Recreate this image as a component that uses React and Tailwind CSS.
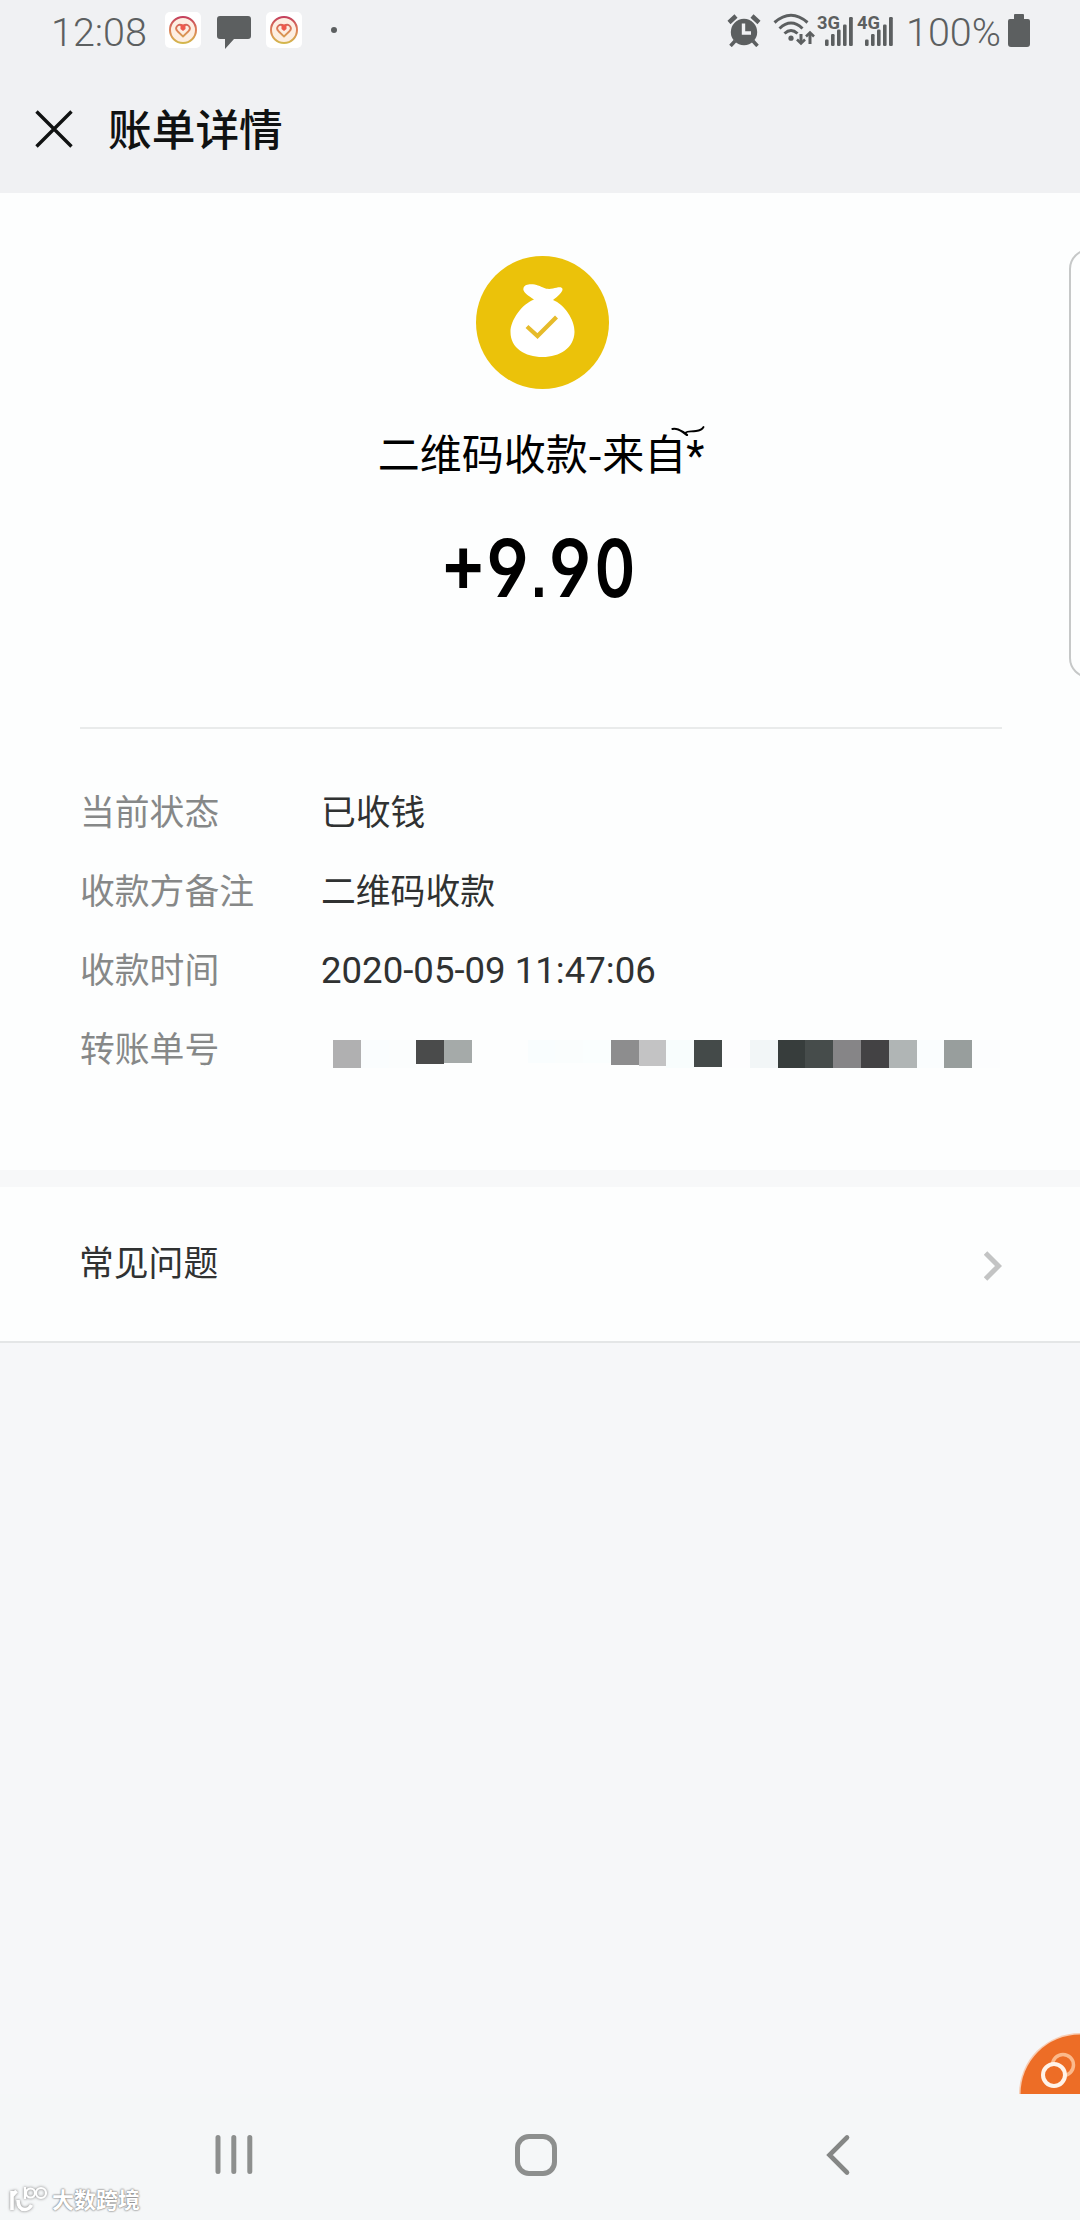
const mosaic = [
  ["bg-[#b0b0b1]", "h-7"], ["bg-[#fafdfe]", "h-7"], ["bg-[#fbfdfd]", "h-7"],
  ["bg-[#4a4b4b]", "h-[24px]"], ["bg-[#a5aaa9]", "h-[23px]"],
  ["bg-[#fdfefe]", "h-[23px]"], ["bg-[#fdfefe]", "h-[23px]"],
  ["bg-[#f9fdfe]", "h-[23px]"], ["bg-[#fafdfd]", "h-[23px]"], ["bg-[#fafefe]", "h-[23px]"],
  ["bg-[#8d8d8e]", "h-[25px]"], ["bg-[#c3c3c4]", "h-[26px]"],
  ["bg-[#f8fdfd]", "h-7"], ["bg-[#444a49]", "h-[27px]"], ["bg-[#fdfdfe]", "h-7"],
  ["bg-[#f2f6f7]", "h-7"], ["bg-[#373d3c]", "h-7"], ["bg-[#464c4b]", "h-7"],
  ["bg-[#868587]", "h-7"], ["bg-[#434244]", "h-7"], ["bg-[#b0b5b5]", "h-7"],
  ["bg-[#fafdfe]", "h-7"], ["bg-[#989e9d]", "h-7"], ["bg-[#fcfdfe]", "h-7"],
];

function HeartBadge({ id }) {
  return (
    <svg className="h-9 w-9" viewBox="0 0 36 36" fill="none">
      <defs>
        <linearGradient id={id} x1="0" y1="4" x2="0" y2="32" gradientUnits="userSpaceOnUse">
          <stop offset="0" stopColor="#c23a5c" />
          <stop offset="0.5" stopColor="#dd8058" />
          <stop offset="1" stopColor="#d3bb4c" />
        </linearGradient>
      </defs>
      <rect width="36" height="36" rx="5" fill="#fff" />
      <circle cx="18" cy="18" r="13" fill="#fdeee2" stroke={`url(#${id})`} strokeWidth="2" />
      <path d="M18 24.5 L12.3 19 C9.3 15.8 13 10.5 18 14 C23 10.5 26.7 15.8 23.7 19 Z" stroke={`url(#${id})`} strokeWidth="1.8" strokeLinejoin="round" />
      <path d="M15.5 12.5h5v4.5L18 19l-2.5-2z" fill="#ee5a4c" />
    </svg>
  );
}

function Signal({ label }) {
  return (
    <svg className="h-8 w-10" viewBox="0 0 40 32" fill="#5c5f60">
      <text x="0" y="14.5" fontFamily="Roboto" fontWeight="700" fontSize="17.5" textLength="23" lengthAdjust="spacingAndGlyphs">{label}</text>
      <rect x="8" y="25.5" width="3.6" height="6.5" rx="1.2" />
      <rect x="14" y="20" width="3.6" height="12" rx="1.2" />
      <rect x="20" y="15.5" width="3.6" height="16.5" rx="1.2" />
      <rect x="26" y="10.5" width="3.6" height="21.5" rx="1.2" />
      <rect x="32" y="3" width="3.8" height="29" rx="1.2" />
    </svg>
  );
}

function StatusBar() {
  return (
    <div className="flex h-[64px] items-start pt-3 pl-[51px] text-[#5c5f60]">
      <span className="mt-[-3px] w-[114px] whitespace-nowrap font-['Roboto'] text-[39.5px] leading-[48px] font-[350]">12:08</span>
      <HeartBadge id="ringA" />
      <svg className="mt-1 ml-4 h-[33px] w-[34px]" viewBox="0 0 34 33" fill="#5c5f60">
        <path d="M3 0H31Q34 0 34 3V20Q34 23 31 23H17L8 33V23H3Q0 23 0 20V3Q0 0 3 0Z" />
      </svg>
      <div className="ml-[15px]"><HeartBadge id="ringB" /></div>
      <span className="mt-[15px] ml-[29px] h-[6px] w-[6px] rounded-full bg-[#5c5f60]" />
      <svg className="mt-[2px] ml-[390px] h-[33px] w-[34px]" viewBox="0 0 34 33">
        <g fill="none" stroke="#5c5f60" strokeLinecap="butt">
          <path d="M2 8.5 9 2M25 2l7 6.5" strokeWidth="4.5" />
          <path d="M8 27l-4.5 5M26 27l4.5 5" strokeWidth="3.5" />
        </g>
        <circle cx="17" cy="18" r="13.2" fill="#5c5f60" />
        <path d="M16.5 9.5V19h7.5" fill="none" stroke="#f0f1f3" strokeWidth="3.4" />
      </svg>
      <svg className="mt-[1px] ml-[12px] h-[34px] w-[43px]" viewBox="0 0 43 34" fill="none" stroke="#5c5f60" strokeWidth="3">
        <path d="M1.5 9.5Q18 -5 34.5 9.5M6.5 15.5Q18 4.5 29.5 15.5M11.5 20.5Q18 14.5 24.5 20.5" />
        <circle cx="18" cy="25.2" r="2.6" fill="#5c5f60" stroke="none" />
        <path d="M28 21v9M37 31v-10" />
        <path d="M24 26.5l4 4 4-4M33 23.5l4-4 4 4" strokeWidth="2.6" />
      </svg>
      <div className="mt-[2px] ml-[1px]"><Signal label="3G" /></div>
      <div className="mt-[2px]"><Signal label="4G" /></div>
      <span className="mt-[-3px] ml-[9px] w-[96px] whitespace-nowrap font-['Roboto'] text-[39.5px] leading-[48px] font-[350]">100%</span>
      <svg className="mt-[2px] ml-[6px] h-[33px] w-[22px]" viewBox="0 0 22 33" fill="#5c5f60">
        <path d="M7 0h8q1 0 1 1v4h4q2 0 2 2v23q0 3-3 3H3q-3 0-3-3V7q0-2 2-2h4V1q0-1 1-1Z" />
      </svg>
    </div>
  );
}

function Row({ label, children }) {
  return (
    <div className="flex h-[79px] items-center text-[34.8px]">
      <div className="mb-[6px] w-[241px] text-[#868888]">{label}</div>
      <div className="mb-[6px] flex-1 text-[#303232]">{children}</div>
    </div>
  );
}

export default function App() {
  return (
    <div className="relative flex h-[2220px] w-[1080px] flex-col overflow-hidden bg-[#f6f7f9] font-['Noto_Sans_CJK_SC',sans-serif]">
      <header className="h-[193px] bg-[#f0f1f3]">
        <StatusBar />
        <div className="flex h-[129px] items-center pl-[35px]">
          <svg className="mt-[1px] h-[38px] w-[38px]" viewBox="0 0 38 38" stroke="#101212" strokeWidth="3.4">
            <path d="M1.5 1.5l35 35M36.5 1.5l-35 35" />
          </svg>
          <h1 className="mb-[2px] ml-[35px] text-[43.7px] leading-none font-medium text-[#101212]">账单详情</h1>
        </div>
      </header>

      <section className="h-[977px] bg-[#fdfefe] px-[79px]">
        <div className="flex h-[534px] flex-col items-center pt-[63px] pl-1">
          <svg className="h-[133px] w-[133px]" viewBox="0 0 133 133">
            <circle cx="66.5" cy="66.5" r="66.5" fill="#ebc20a" />
            <path d="M58 43.5C53 40 46 36 47.5 32C49 27 58 28 62 29.5C68 31.5 70 34 77 32.5C81 31.5 86 30 86.5 33C87 36 81 41 77 44C88 48 99 64 98.5 76C98 92 84 101 66.5 101C49 101 34.5 92 34.5 76C34.5 64 46 48 58 43.5Z" fill="#fff" />
            <path d="M51 70.5L61.5 80L80.5 61" fill="none" stroke="#e6bb2a" strokeWidth="4.2" />
          </svg>
          <div className="relative mt-[33px] mr-[2px] text-[42px] leading-[60px] whitespace-nowrap text-black">
            二维码收款-来自<span className="font-['Roboto']">*</span>
            <svg className="absolute top-[4px] right-[-1px] h-[10px] w-[34px]" viewBox="0 0 34 10" fill="none" stroke="#000" strokeLinecap="round">
              <path d="M1.5 3C5 2 8 3.5 12 6L16 9" strokeWidth="2.2" />
              <path d="M14 7C17 4.500 20 6 25 5C29 4.500 31 4 32.5 1" strokeWidth="1.8" />
            </svg>
          </div>
          <div className="mt-[37px] mr-[6px] flex h-[90px] scale-x-[0.88] items-center font-['Inter'] text-[80px] leading-none font-semibold text-black [font-feature-settings:'cv04']">
            <span>+9<span className="px-[2px] font-['DejaVu_Sans'] text-[50px] font-bold">.</span>9<span className="inline-block scale-x-[0.87]">0</span></span>
          </div>
        </div>
        <div className="mr-[-1px] ml-px h-[2px] bg-[#e9ebeb]" />
        <div className="ml-px pt-[45px]">
          <Row label="当前状态">已收钱</Row>
          <Row label="收款方备注">二维码收款</Row>
          <Row label="收款时间"><div className="mt-[5px] font-['Roboto'] text-[36.6px]">2020-05-09 11:47:06</div></Row>
          <Row label="转账单号">
            <div className="mt-[12px] ml-3 grid h-7 w-[667px] grid-cols-24">
              {mosaic.map(([color, height], i) => <span key={i} className={`${color} ${height}`} />)}
            </div>
          </Row>
        </div>
      </section>

      <div className="h-[17px] bg-[#f7f8f9]" />

      <section className="flex h-[156px] items-center justify-between border-b-2 border-[#e4e6e7] bg-[#fdfefe] pr-[78px] pl-[79px]">
        <span className="mb-[5px] text-[34.8px] text-[#303232]">常见问题</span>
        <svg className="mt-[3px] h-[30px] w-[18px]" viewBox="0 0 18 30" fill="none" stroke="#c3c4c4" strokeWidth="5">
          <path d="M1.5 2L14.5 15L1.5 28" />
        </svg>
      </section>

      <main className="flex-1 bg-[#f6f7f9]" />

      <nav className="relative flex h-[126px] items-start bg-[#f5f7f8] pt-[40px]">
        <svg className="ml-[215px] h-[41px] w-[38px]" viewBox="0 0 38 41" stroke="#8d8f8e" strokeWidth="5" strokeLinecap="round">
          <path d="M3 3.5v34M18.8 3.5v34M34.8 3.5v34" />
        </svg>
        <span className="ml-[262px] h-[42px] w-[42px] rounded-[14px] border-[5px] border-[#8d8f8e]" />
        <svg className="ml-[269px] h-[42px] w-[26px]" viewBox="0 0 26 42" fill="none" stroke="#858786" strokeWidth="4.6" strokeLinecap="round">
          <path d="M21 3.5L3.5 21L21 38.5" />
        </svg>
        <div className="absolute bottom-[6px] left-[8px] flex items-center gap-[2px]">
          <svg className="h-[32px] w-[42px] [filter:drop-shadow(0_0_1.5px_#777)]" viewBox="0 0 42 32" fill="none" stroke="#fff">
            <path d="M4 9V28M4 14L8.500 9M10 18Q10 27.500 17 27.500Q21 27.500 23.500 23" strokeWidth="3.6" />
            <g strokeWidth="2.2"><path d="M17 5v12" /><circle cx="22.500" cy="11" r="4.500" /><circle cx="33" cy="11" r="5" /></g>
          </svg>
          <span className="text-[22px] leading-[28px] font-bold text-white [text-shadow:0_0_2px_#777,0_0_2px_#888]">大数跨境</span>
        </div>
      </nav>

      <div className="absolute top-[249px] left-[1069px] h-[429px] w-[40px] rounded-[20px] border-2 border-[#c6c8c8] bg-[#fdfefe]" />
      <svg className="absolute top-[2032px] right-0 h-[62px] w-[62px]" viewBox="0 0 62 62">
        <circle cx="62" cy="62" r="61" fill="#f8cdb4" />
        <circle cx="62" cy="62" r="59.5" fill="#ed6d26" />
        <circle cx="45" cy="33" r="10.5" fill="none" stroke="#fbb98b" strokeWidth="3.5" />
        <circle cx="36" cy="43" r="11" fill="#ed6d26" stroke="#fff3e9" strokeWidth="4" />
      </svg>
    </div>
  );
}
